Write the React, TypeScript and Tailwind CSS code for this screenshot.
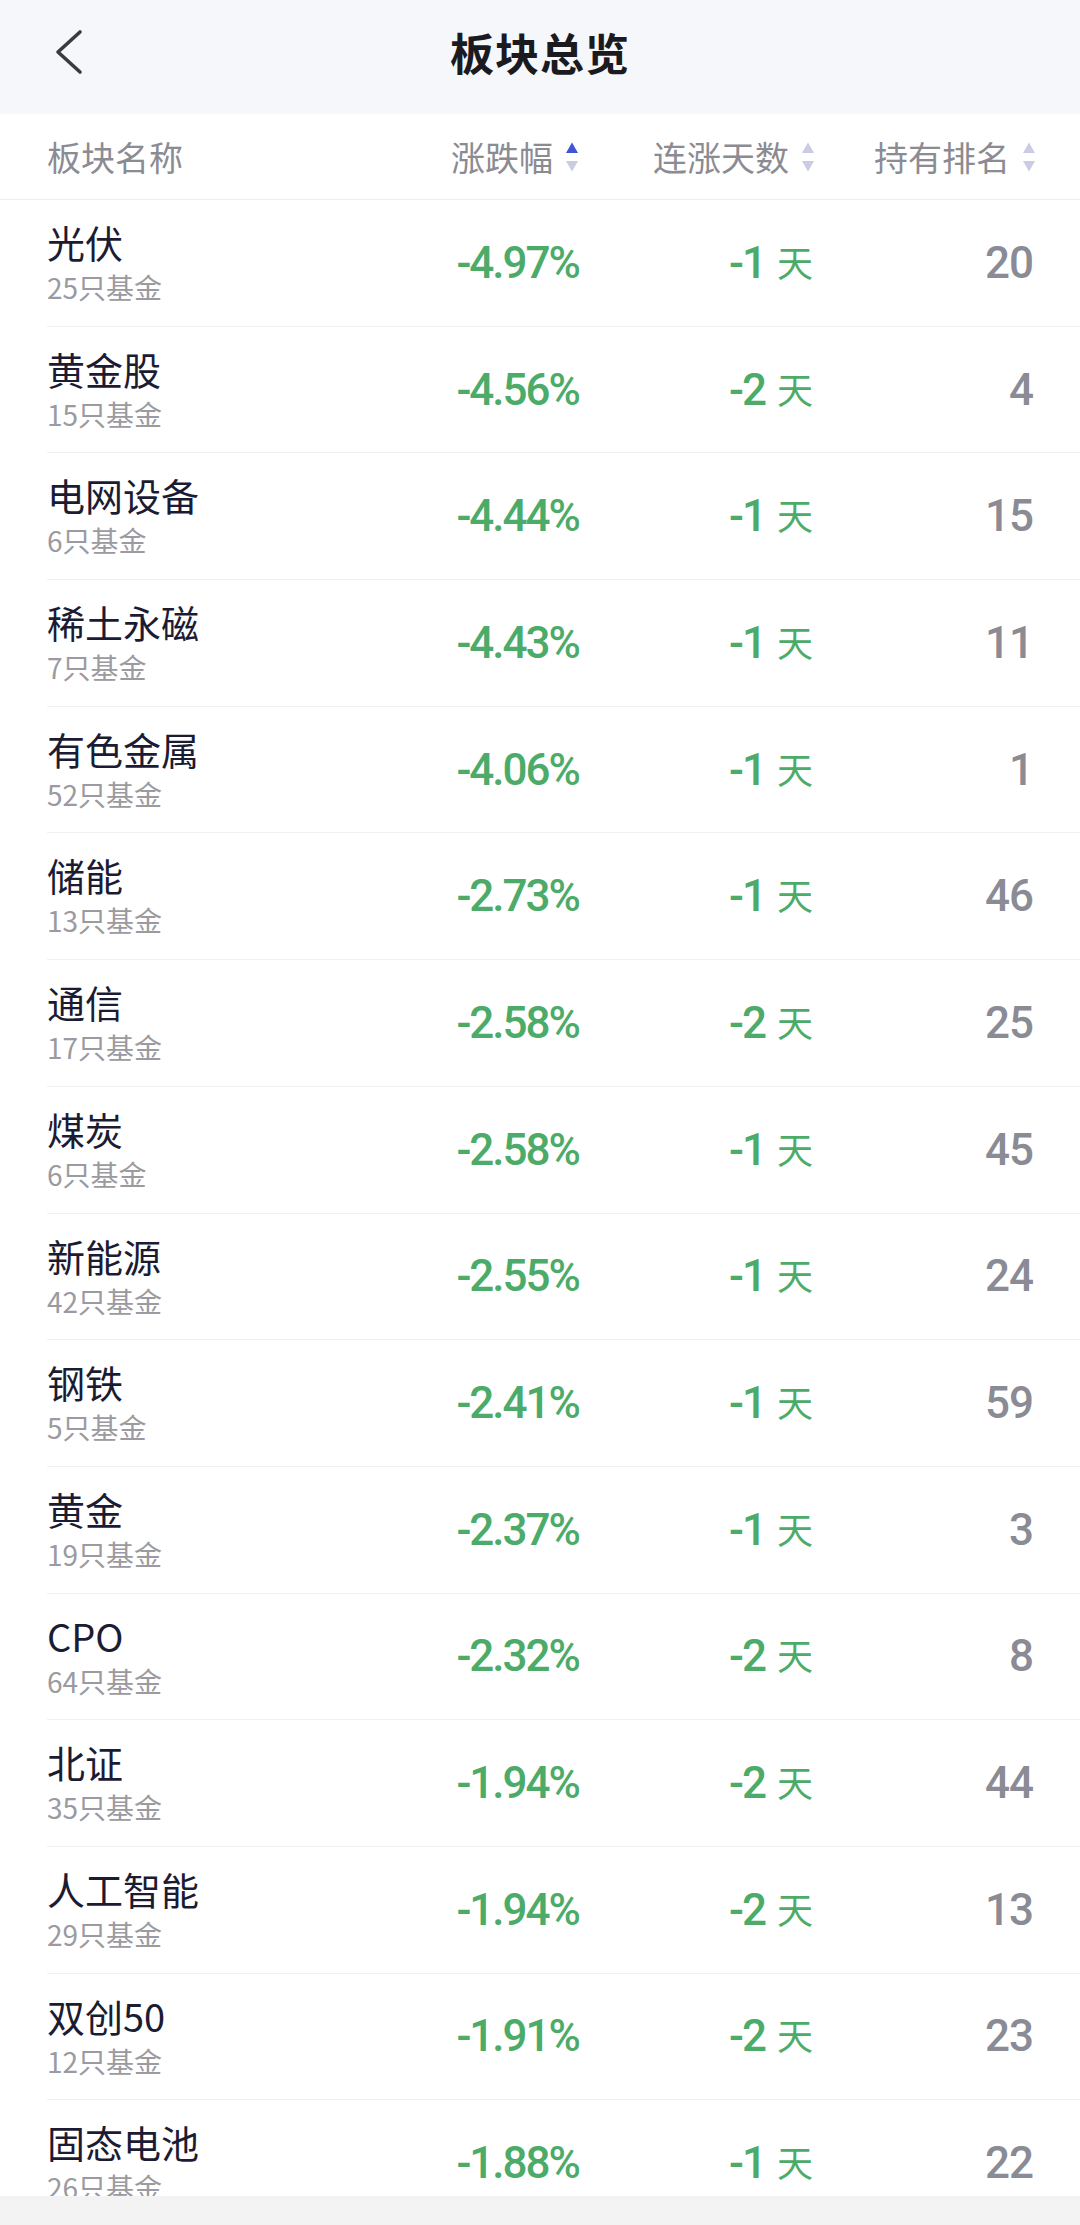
import React from "react";

type Row = { name: string; count: number; change: string; days: number; rank: number };

const rows: Row[] = [
  { name: "光伏", count: 25, change: "-4.97%", days: -1, rank: 20 },
  { name: "黄金股", count: 15, change: "-4.56%", days: -2, rank: 4 },
  { name: "电网设备", count: 6, change: "-4.44%", days: -1, rank: 15 },
  { name: "稀土永磁", count: 7, change: "-4.43%", days: -1, rank: 11 },
  { name: "有色金属", count: 52, change: "-4.06%", days: -1, rank: 1 },
  { name: "储能", count: 13, change: "-2.73%", days: -1, rank: 46 },
  { name: "通信", count: 17, change: "-2.58%", days: -2, rank: 25 },
  { name: "煤炭", count: 6, change: "-2.58%", days: -1, rank: 45 },
  { name: "新能源", count: 42, change: "-2.55%", days: -1, rank: 24 },
  { name: "钢铁", count: 5, change: "-2.41%", days: -1, rank: 59 },
  { name: "黄金", count: 19, change: "-2.37%", days: -1, rank: 3 },
  { name: "CPO", count: 64, change: "-2.32%", days: -2, rank: 8 },
  { name: "北证", count: 35, change: "-1.94%", days: -2, rank: 44 },
  { name: "人工智能", count: 29, change: "-1.94%", days: -2, rank: 13 },
  { name: "双创50", count: 12, change: "-1.91%", days: -2, rank: 23 },
  { name: "固态电池", count: 26, change: "-1.88%", days: -1, rank: 22 },
];

const CJK = "font-['Noto_Sans_CJK_SC','Noto_Sans',sans-serif]";
const NUM = "font-['Roboto','Noto_Sans_CJK_SC',sans-serif]";

function SortIcon({ active }: { active?: boolean }) {
  return (
    <svg width="14" height="32" viewBox="0 0 14 32" className="ml-[12px] shrink-0">
      <polygon points="1,12 13,12 7,1.5" fill={active ? "#3f54d6" : "#c9cce3"} />
      <polygon points="1,20 13,20 7,30.5" fill="#c9cce3" />
    </svg>
  );
}

export default function App() {
  return (
    <div className={`w-[1080px] h-[2225px] bg-white flex flex-col overflow-hidden ${CJK}`}>
      {/* Nav bar */}
      <div className="h-[114px] shrink-0 bg-[#f6f7fa] grid grid-cols-[1fr_auto_1fr] items-center pb-[10px]">
        <div className="pl-[54px] flex items-center">
          <svg width="30" height="46" viewBox="0 0 30 46" fill="none">
            <path d="M26 3 L4 23 L26 43" stroke="#3a3a3f" strokeWidth="3.6" strokeLinecap="round" strokeLinejoin="round" />
          </svg>
        </div>
        <div className="text-[44px] leading-[52px] font-bold text-[#1a1a1f] tracking-[1px]">板块总览</div>
        <div />
      </div>

      {/* Column header */}
      <div className="h-[86px] shrink-0 border-b border-[#eeeeee] flex items-center pl-[47px] pr-[44px] text-[34px] text-[#8b8b92]">
        <div className="flex-1">板块名称</div>
        <div className="flex items-center justify-end">
          <span>涨跌幅</span>
          <SortIcon active />
        </div>
        <div className="w-[236px] flex items-center justify-end">
          <span>连涨天数</span>
          <SortIcon />
        </div>
        <div className="w-[221px] flex items-center justify-end">
          <span>持有排名</span>
          <SortIcon />
        </div>
      </div>

      {/* Rows */}
      <div className="flex-1 overflow-hidden">
        {rows.map((r) => (
          <div key={r.name} className="ml-[47px] pr-[47px] h-[126.7px] border-b border-[#f1f1f3] flex">
            <div className="flex-1 flex flex-col pt-[19px]">
              <div className="text-[38px] leading-[46px] text-[#1b1c33]">{r.name}</div>
              <div className="text-[28px] leading-[40px] text-[#9a9aa0] mt-[2px]">{r.count}只基金</div>
            </div>
            <div className="flex items-center justify-end">
              <span className={`${NUM} text-[44px] font-medium tracking-[-2px] text-[#4cab68] leading-none`}>{r.change}</span>
            </div>
            <div className="w-[234px] flex items-center justify-end">
              <span className={`${NUM} text-[44px] font-medium tracking-[-2px] text-[#4cab68] leading-none`}>{r.days}</span>
              <span className="text-[36px] leading-none text-[#4cab68] ml-[12px] mb-[4px]">天</span>
            </div>
            <div className="w-[220px] flex items-center justify-end">
              <span className={`${NUM} text-[44px] font-medium tracking-[-1px] text-[#8a8b94] leading-none`}>{r.rank}</span>
            </div>
          </div>
        ))}
      </div>

      {/* Bottom system bar */}
      <div className="h-[29px] shrink-0 bg-[#f3f3f3]" />
    </div>
  );
}
